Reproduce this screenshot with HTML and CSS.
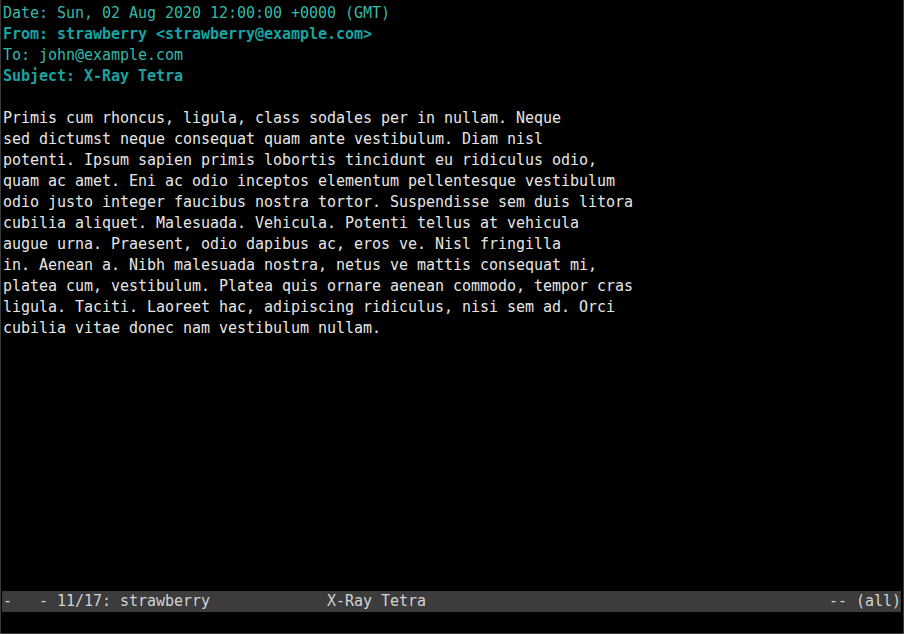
FILE: index.html
```html
<!DOCTYPE html>
<html>
<head>
<meta charset="utf-8">
<link rel="stylesheet" href="styles.css">
</head>
<body>
<div class="screen">
  <div class="pager">
    <div class="line hdr">Date: Sun, 02 Aug 2020 12:00:00 +0000 (GMT)</div>
    <div class="line hdr-b">From: strawberry &lt;strawberry@example.com&gt;</div>
    <div class="line hdr">To: john@example.com</div>
    <div class="line hdr-b">Subject: X-Ray Tetra</div>
    <div class="line"> </div>
    <div class="line">Primis cum rhoncus, ligula, class sodales per in nullam. Neque</div>
    <div class="line">sed dictumst neque consequat quam ante vestibulum. Diam nisl</div>
    <div class="line">potenti. Ipsum sapien primis lobortis tincidunt eu ridiculus odio,</div>
    <div class="line">quam ac amet. Eni ac odio inceptos elementum pellentesque vestibulum</div>
    <div class="line">odio justo integer faucibus nostra tortor. Suspendisse sem duis litora</div>
    <div class="line">cubilia aliquet. Malesuada. Vehicula. Potenti tellus at vehicula</div>
    <div class="line">augue urna. Praesent, odio dapibus ac, eros ve. Nisl fringilla</div>
    <div class="line">in. Aenean a. Nibh malesuada nostra, netus ve mattis consequat mi,</div>
    <div class="line">platea cum, vestibulum. Platea quis ornare aenean commodo, tempor cras</div>
    <div class="line">ligula. Taciti. Laoreet hac, adipiscing ridiculus, nisi sem ad. Orci</div>
    <div class="line">cubilia vitae donec nam vestibulum nullam.</div>
  </div>
  <div class="status"><span class="line">-   - 11/17: strawberry             X-Ray Tetra</span><span class="line">-- (all)</span></div>
  <div class="line"> </div>
</div>
</body>
</html>
```

FILE: styles.css
```css
html, body {
  margin: 0;
  padding: 0;
  background: #000;
}
.screen {
  box-sizing: border-box;
  width: 904px;
  height: 634px;
  padding: 3px 2px 0 1px;
  border-left: 1px solid #3a3a3a;
  border-right: 1px solid #3a3a3a;
  border-bottom: 1px solid #3a3a3a;
  display: flex;
  flex-direction: column;
  font-family: "DejaVu Sans Mono", "Liberation Mono", monospace;
  font-size: 15px;
  letter-spacing: -0.03px;
  color: #e6e6e6;
  overflow: hidden;
}
.pager {
  flex: 1;
  padding-left: 1px;
}
.line {
  height: 21px;
  line-height: 21px;
  white-space: pre;
}
.hdr {
  color: #36b8a8;
}
.hdr-b {
  color: #1aa3a3;
  font-weight: bold;
}
.status {
  display: flex;
  justify-content: space-between;
  background: #3c3c3c;
  color: #d2d2d2;
  padding-left: 1px;
  height: 21px;
}
```
